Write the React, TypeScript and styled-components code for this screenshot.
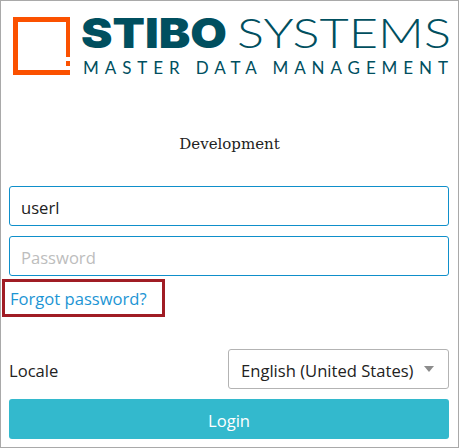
import React from "react";
import styled, { createGlobalStyle } from "styled-components";

const Global = createGlobalStyle`
  html, body { margin: 0; padding: 0; background: #fff; }
  * { box-sizing: border-box; }
`;

const Frame = styled.div`
  width: 459px;
  height: 448px;
  border: 1px solid #a9a9a9;
  background: #fff;
  padding: 0 8px;
  font-family: "Open Sans", "Noto Sans", sans-serif;
  font-size: 16.6px;
  color: #222;
  overflow: hidden;
`;

const LogoWrap = styled.div`
  height: 92px;
  margin: 0 -8px;
  svg { display: block; }
`;

const Env = styled.div`
  margin-top: 41px;
  height: 20px;
  line-height: 20px;
  text-align: center;
  font-family: "DejaVu Serif", serif;
  font-size: 15px;
  color: #222;
`;

const Fields = styled.div`
  margin-top: 32px;
`;

const Field = styled.input`
  display: block;
  width: 440px;
  height: 40px;
  margin-bottom: 10px;
  padding: 2px 11px 0;
  border: 1px solid #0f8fca;
  border-radius: 3px;
  outline: none;
  background: #fff;
  font-family: inherit;
  font-size: 16.6px;
  color: #222;
  &::placeholder { color: #bdbdbd; opacity: 1; }
`;

const ForgotBox = styled.div`
  width: 163px;
  height: 38px;
  margin: -7px 0 0 -7px;
  border: 3px solid #a01c24;
  padding: 1px 0 0 5px;
  display: flex;
  align-items: center;
`;

const ForgotLink = styled.a`
  color: #1c95d4;
  font-size: 16.6px;
  text-decoration: none;
  white-space: nowrap;
`;

const LocaleRow = styled.div`
  margin-top: 32px;
  width: 440px;
  height: 40px;
  display: flex;
  align-items: center;
  justify-content: space-between;
`;

const LocaleLabel = styled.label`
  padding-top: 3px;
  font-size: 16.6px;
  color: #222;
`;

const SelectBox = styled.div`
  width: 221px;
  height: 40px;
  border: 1px solid #b3b3b3;
  border-radius: 3px;
  padding: 3px 14px 0 12px;
  display: flex;
  align-items: center;
  justify-content: space-between;
  font-size: 16.6px;
  color: #222;
  white-space: nowrap;
`;

const Caret = styled.span`
  width: 0;
  height: 0;
  margin-top: -3px;
  border-left: 5.5px solid transparent;
  border-right: 5.5px solid transparent;
  border-top: 6px solid #8c8c8c;
`;

const LoginButton = styled.button`
  display: block;
  width: 440px;
  height: 40px;
  margin-top: 10px;
  padding: 3px 0 0;
  border: 0;
  border-radius: 3px;
  background: #33b9cd;
  color: #fff;
  font-family: inherit;
  font-size: 16.6px;
`;

const Logo = () => (
  <svg width="457" height="92" viewBox="1 1 457 92">
    <path
      fill="#fb5100"
      d="M13 17H70V57H66V22H18V70H70V75H13ZM66 61H70V66H66Z"
    />
    <g fill="#004f5f">
      <text x="81" y="48" fontFamily="Inter, sans-serif" fontWeight="900" fontSize="41" textLength="146" lengthAdjust="spacingAndGlyphs">STIBO</text>
      <text x="237" y="48" fontFamily="Lato, sans-serif" fontWeight="300" fontSize="42" textLength="214" lengthAdjust="spacingAndGlyphs">SYSTEMS</text>
      <text x="83" y="74" fontFamily="Lato, sans-serif" fontWeight="400" fontSize="17" textLength="365" lengthAdjust="spacing">MASTER DATA MANAGEMENT</text>
    </g>
  </svg>
);

export default function App() {
  return (
    <>
      <Global />
      <Frame>
        <LogoWrap><Logo /></LogoWrap>
        <Env>Development</Env>
        <Fields>
          <Field type="text" defaultValue="userl" />
          <Field type="password" placeholder="Password" />
        </Fields>
        <ForgotBox>
          <ForgotLink href="#">Forgot password?</ForgotLink>
        </ForgotBox>
        <LocaleRow>
          <LocaleLabel>Locale</LocaleLabel>
          <SelectBox>
            English (United States)
            <Caret />
          </SelectBox>
        </LocaleRow>
        <LoginButton>Login</LoginButton>
      </Frame>
    </>
  );
}
